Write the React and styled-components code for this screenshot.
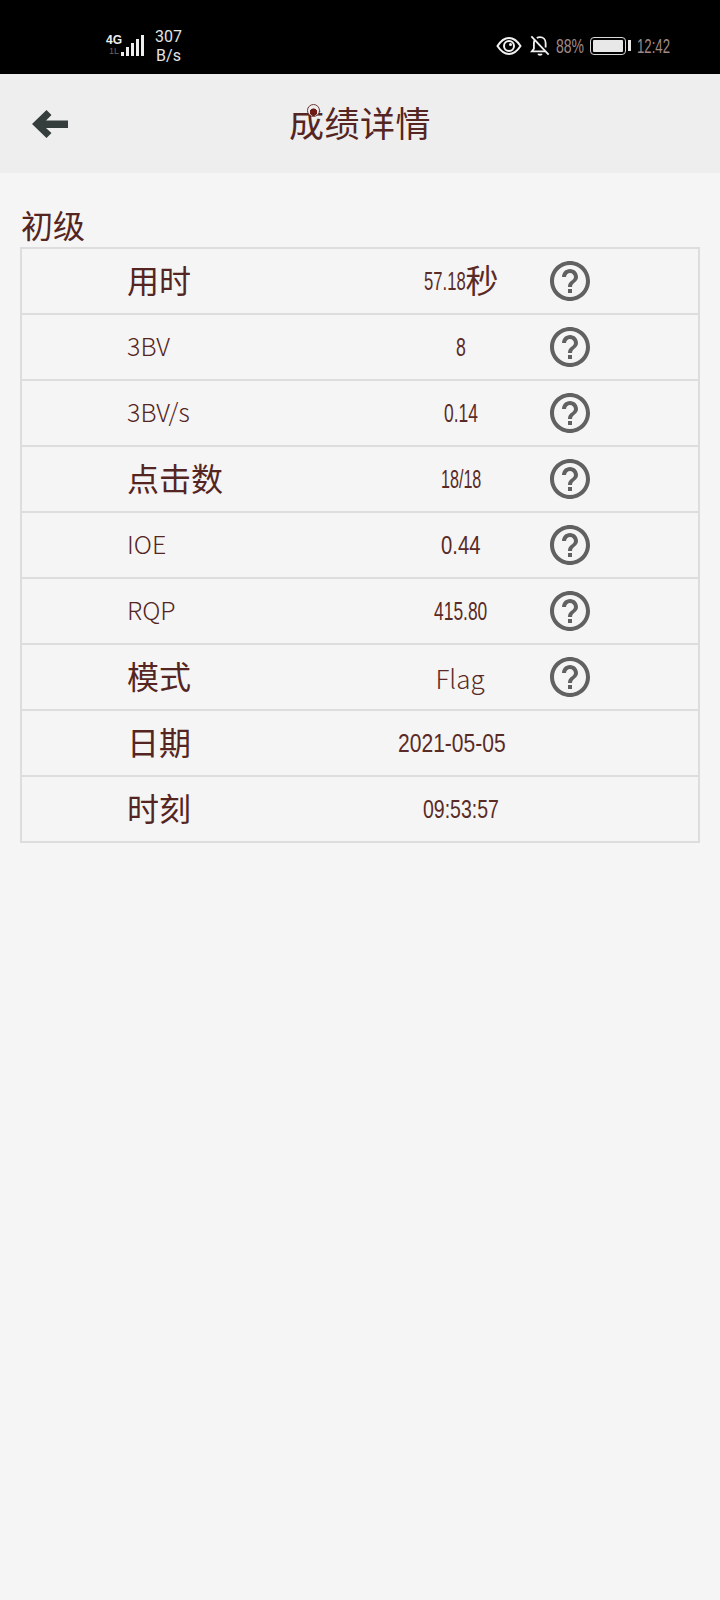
import React from "react";
import styled, { createGlobalStyle } from "styled-components";
import { MdHelpOutline } from "react-icons/md";

// width / scale: the digits of the reference are much narrower than Liberation Sans
const rows = [
    { label: "用时", value: "57.18", unit: "秒", width: 42, scale: 0.64, help: true },
    { label: "3BV", value: "8", width: 10, scale: 0.68, help: true, latin: true },
    { label: "3BV/s", value: "0.14", width: 34, scale: 0.67, help: true, latin: true },
    { label: "点击数", value: "18/18", width: 40, scale: 0.62, help: true },
    { label: "IOE", value: "0.44", width: 40, scale: 0.78, help: true, latin: true },
    { label: "RQP", value: "415.80", width: 54, scale: 0.67, help: true, latin: true },
    { label: "模式", value: "Flag", width: 51, scale: 1, help: true, light: true },
    { label: "日期", value: "2021-05-05", width: 126, scale: 0.81 },
    { label: "时刻", value: "09:53:57", width: 76, scale: 0.75 },
];

function App() {
    return (
        <>
            <GlobalStyle />
            <Page>
                <StatusBar>
                    <StatusLeft>
                        <Signal>
                            <NetworkTag>
                                <b>4G</b>
                                <small>1L</small>
                            </NetworkTag>
                            <svg width="24" height="22" viewBox="0 0 24 22">
                                <rect x="0" y="17" width="3" height="4" fill="#eee" />
                                <rect x="5" y="12" width="3" height="9" fill="#eee" />
                                <rect x="10" y="8" width="3" height="13" fill="#eee" />
                                <rect x="15" y="4" width="3" height="17" fill="#eee" />
                                <rect x="20" y="0" width="3" height="21" fill="#eee" />
                            </svg>
                        </Signal>
                        <Speed>
                            <span>307</span>
                            <span>B/s</span>
                        </Speed>
                    </StatusLeft>
                    <StatusRight>
                        <EyeIcon width="26" height="20" viewBox="0 0 26 20" fill="none" stroke="#f2f2f2">
                            <path d="M1.5 10C5 4.5 8.500 2 13 2s8 2.500 11.500 8C21 15.500 17.500 18 13 18S5 15.500 1.500 10Z" strokeWidth="2" />
                            <circle cx="13" cy="10" r="5" strokeWidth="2" />
                            <circle cx="14.500" cy="8.500" r="1.500" fill="#f2f2f2" stroke="none" />
                        </EyeIcon>
                        <svg width="20" height="24" viewBox="0 0 22 24" fill="none" stroke="#f2f2f2" strokeWidth="2">
                            <path d="M5 5.500C4.500 6.500 4.300 7.500 4.300 9v6L2 18h14.500M7.500 3.200C8.500 2.500 9.600 2.200 11 2.200c3.700 0 6.200 2.800 6.200 6.500v5" />
                            <path d="M9 20.500c.5 1.500 3.500 1.500 4 0" />
                            <path d="M1.500 1.500l19 20" />
                        </svg>
                        <StatusText $width={28} $scale={0.7}>88%</StatusText>
                        <BatteryIcon>
                            <BatteryFill />
                        </BatteryIcon>
                        <StatusText $width={33} $scale={0.66}>12:42</StatusText>
                    </StatusRight>
                </StatusBar>
                <NavBar>
                    <BackButton>
                        <svg width="38" height="30" viewBox="0 0 38 30">
                            <path d="M15.500 1l5 5-5.500 5.500H37v7.500H15l5.500 5-5 5L1 15Z" fill="#353d3d" />
                        </svg>
                    </BackButton>
                    <Title>成绩详情</Title>
                </NavBar>
                <Content>
                    <SectionLabel>初级</SectionLabel>
                    <Table>
                        {rows.map((row) => (
                            <Row key={row.label}>
                                <Label $latin={row.latin}>{row.label}</Label>
                                <Value>
                                    <Digits $width={row.width} $scale={row.scale} $light={row.light}>{row.value}</Digits>
                                    {row.unit && <Unit>{row.unit}</Unit>}
                                </Value>
                                {row.help && (
                                    <HelpIcon>
                                        <MdHelpOutline size={48} />
                                    </HelpIcon>
                                )}
                            </Row>
                        ))}
                    </Table>
                </Content>
            </Page>
        </>
    );
}

const GlobalStyle = createGlobalStyle`
    * {
        box-sizing: border-box;
    }

    body {
        margin: 0;
        background-color: #f5f5f5;
        font-family: "Noto Sans CJK SC", sans-serif;
    }
`;

const Page = styled.div`
    width: 720px;
    min-height: 1600px;
    background-color: #f5f5f5;
`;

const StatusBar = styled.div`
    height: 74px;
    background-color: #000;
    display: flex;
    align-items: center;
    justify-content: space-between;
    padding: 18px 50px 0 107px;
`;

const StatusLeft = styled.div`
    display: flex;
    align-items: center;
    gap: 10px;
`;

const Signal = styled.div`
    display: flex;
    align-items: center;
`;

const NetworkTag = styled.div`
    display: flex;
    flex-direction: column;
    align-items: center;
    width: 14px;
    line-height: 11px;
    font-family: "Liberation Sans", sans-serif;
    color: #eee;

    b {
        font-size: 12px;
    }

    small {
        font-size: 9px;
        color: #666;
    }
`;

const Speed = styled.div`
    display: flex;
    flex-direction: column;
    align-items: center;
    font-family: Roboto, sans-serif;
    font-size: 16px;
    line-height: 19px;
    color: #e4e4e4;
`;

const StatusRight = styled.div`
    display: flex;
    align-items: center;
    gap: 6px;
`;

const EyeIcon = styled.svg`
    margin-right: 2px;
`;

const StatusText = styled.span`
    display: inline-block;
    width: ${(props) => props.$width}px;
    font-family: "Liberation Sans", sans-serif;
    font-size: 20px;
    white-space: nowrap;
    color: #a08a86;
    transform: scaleX(${(props) => props.$scale});
    transform-origin: left center;
`;

const BatteryIcon = styled.div`
    position: relative;
    width: 36px;
    height: 18px;
    margin-right: 5px;
    padding: 2px;
    border: 1.5px solid #d8d8d8;
    border-radius: 4px;

    &::after {
        content: "";
        position: absolute;
        top: 2px;
        right: -6px;
        width: 3px;
        height: 11px;
        background-color: #e8e8e8;
    }
`;

const BatteryFill = styled.div`
    width: 100%;
    height: 100%;
    background-color: #e8e8e8;
    border-radius: 1px;
`;

const NavBar = styled.div`
    height: 99px;
    background-color: #eeeeee;
    display: grid;
    grid-template-columns: 1fr auto 1fr;
    align-items: center;
`;

const BackButton = styled.div`
    display: flex;
    padding-left: 31px;
`;

const Title = styled.div`
    position: relative;
    margin-bottom: 4px;
    font-size: 35px;
    line-height: 50px;
    letter-spacing: 0.5px;
    color: #552522;

    &::before {
        content: "";
        position: absolute;
        top: 7px;
        left: 18px;
        width: 11px;
        height: 11px;
        border: 1px solid #6d3a36;
        border-radius: 50%;
        background: radial-gradient(circle at 50% 65%, #6d1a16 38%, #eee 44%);
    }
`;

const Content = styled.div`
    padding: 30px 20px 0 20px;
`;

const SectionLabel = styled.div`
    height: 44px;
    padding-left: 1px;
    font-size: 32px;
    line-height: 42px;
    color: #552522;
`;

const Table = styled.div`
    width: 680px;
    border: 2px solid #dddddd;
    border-bottom: none;
`;

const Row = styled.div`
    height: 66px;
    display: grid;
    grid-template-columns: 359px 160px 58px;
    align-items: center;
    border-bottom: 2px solid #dddddd;
`;

const Label = styled.div`
    padding-left: 105px;
    padding-bottom: 5px;
    font-size: ${(props) => (props.$latin ? "25px" : "32px")};
    font-weight: ${(props) => (props.$latin ? 300 : 400)};
    color: #552522;
`;

const Value = styled.div`
    display: flex;
    justify-content: center;
    align-items: center;
    color: #5a2a26;
`;

const Digits = styled.span`
    display: inline-block;
    width: ${(props) => props.$width}px;
    font-family: ${(props) => (props.$light ? '"Noto Sans CJK SC"' : '"Liberation Sans"')}, sans-serif;
    font-size: 26px;
    font-weight: ${(props) => (props.$light ? 300 : 400)};
    white-space: nowrap;
    transform: scaleX(${(props) => props.$scale});
    transform-origin: left center;
`;

const Unit = styled.span`
    font-size: 33px;
    line-height: 40px;
    margin-bottom: 4px;
`;

const HelpIcon = styled.div`
    display: flex;
    justify-content: center;
    color: #616161;
`;

export default App;
